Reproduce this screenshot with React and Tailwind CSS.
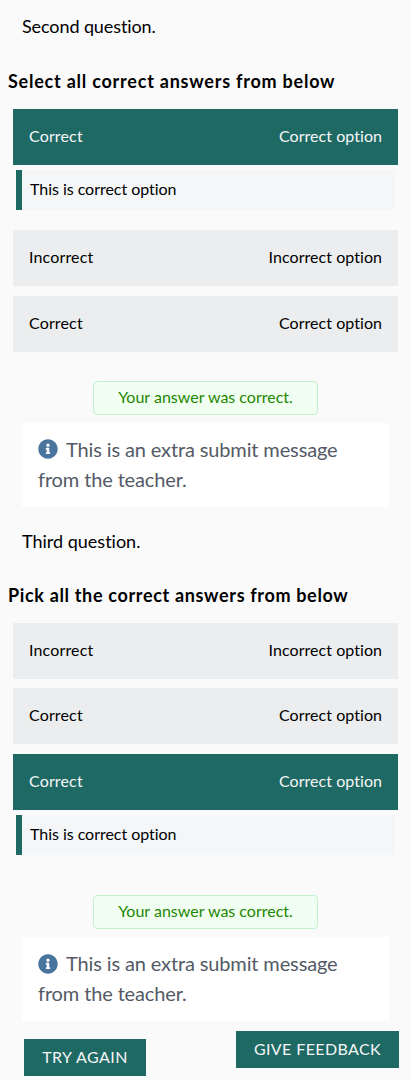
import { FaInfoCircle } from "react-icons/fa";

function Option({ label, text, selected, className = "" }) {
  return (
    <div
      className={`flex h-14 items-center justify-between px-4 pb-[3px] text-base ${
        selected ? "bg-[#1f6964] text-[#f5f6f7]" : "bg-[#ebedee] text-black"
      } ${className}`}
    >
      <span className="tracking-[0.15px]">{label}</span>
      <span className="tracking-[0.05px]">{text}</span>
    </div>
  );
}

function Feedback({ children }) {
  return (
    <div className="mx-[3px] mt-[5px] flex h-10 items-center border-l-6 border-[#1f6964] bg-[#f4f6f8] px-2 pb-[3px] text-base tracking-[-0.04px]">
      {children}
    </div>
  );
}

function Question({ title, titleStyle, heading, headingStyle, iconAlign, gap, children }) {
  return (
    <section>
      <p className={`h-[54px] pl-[22px] text-lg leading-[27px] ${titleStyle}`}>{title}</p>
      <h2 className={`h-[55px] pl-2 pt-[14px] text-lg font-bold leading-[27px] ${headingStyle}`}>{heading}</h2>
      <div className="ml-[13px] mr-[13px]">{children}</div>
      <div className={`flex justify-center ${gap}`}>
        <div className="flex h-[34px] w-[225px] items-center justify-center rounded-[4px] border border-[#c5f2cb] bg-[#f0fff1] pb-[3px] text-base text-[#1f8703]">
          Your answer was correct.
        </div>
      </div>
      <div className="mx-[22px] mt-2 h-[84px] bg-white px-4 pt-[11px] text-xl leading-[30px] tracking-[-0.13px] text-[#535a66]">
        <FaInfoCircle className={`mr-2 inline-block size-5 text-[#48749e] ${iconAlign}`} />
        This is an extra submit message from the teacher.
      </div>
    </section>
  );
}

export default function App() {
  return (
    <main className="flex h-[1080px] w-[411px] flex-col gap-[7px] overflow-hidden bg-[#fafafa] font-[Lato,sans-serif] text-black [font-variant-ligatures:none]">
      <Question
        title="Second question."
        titleStyle="pt-[13px] tracking-[-0.1px]"
        heading="Select all correct answers from below"
        headingStyle="tracking-[0.77px]"
        iconAlign="align-[-2px]"
        gap="mt-[29px]"
      >
        <Option label="Correct" text="Correct option" selected />
        <Feedback>This is correct option</Feedback>
        <Option label="Incorrect" text="Incorrect option" className="mt-5" />
        <Option label="Correct" text="Correct option" className="mt-[10px]" />
      </Question>
      <Question
        title="Third question."
        titleStyle="pt-[14px]"
        heading="Pick all the correct answers from below"
        headingStyle="tracking-[0.66px]"
        iconAlign="align-[-3px]"
        gap="mt-10"
      >
        <Option label="Incorrect" text="Incorrect option" />
        <Option label="Correct" text="Correct option" className="mt-[9px]" />
        <Option label="Correct" text="Correct option" className="mt-[10px]" selected />
        <Feedback>This is correct option</Feedback>
      </Question>
      <div className="flex items-start justify-between pl-6 pr-3 pt-[3px] text-base text-[#f5f6f7]">
        <button className="mt-2 h-[37px] w-[122px] bg-[#1f6964] pb-0.5 tracking-[0.45px]">TRY AGAIN</button>
        <button className="h-[37px] w-[163px] bg-[#1f6964] pb-0.5 tracking-[0.4px]">GIVE FEEDBACK</button>
      </div>
    </main>
  );
}
